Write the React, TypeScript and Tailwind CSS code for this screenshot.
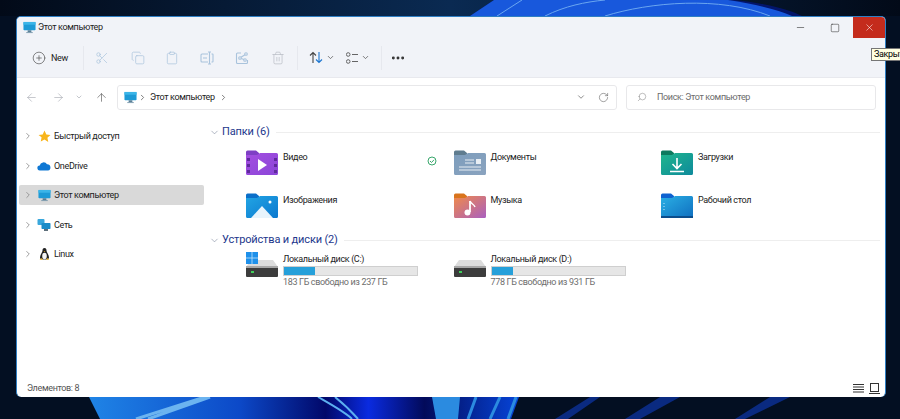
import { ArrowLeft, ArrowRight, ArrowUp, ChevronDown, ChevronRight, CirclePlus, Clipboard, Copy, Ellipsis, RotateCw, Scissors, Search, Square, Trash2, X, Minus } from 'lucide-react'
import type { ReactNode } from 'react'

const font = "font-['Roboto','Open_Sans',sans-serif]"
// window text is Segoe-narrow in the picture, Roboto needs a little squeezing
const small = 'text-[9px] tracking-[-0.35px]'
const nudged = 'text-[9px] tracking-[-0.35px] translate-y-[1px]'

function Wallpaper() {
  return (
    <svg className="absolute inset-0" width="900" height="419" viewBox="0 0 900 419">
      <defs>
        <linearGradient id="top" x1="0" y1="0" x2="1" y2="0">
          <stop offset="0" stopColor="#020a18" />
          <stop offset="0.5" stopColor="#0a2a52" />
          <stop offset="1" stopColor="#020a18" />
        </linearGradient>
        <linearGradient id="bottom" x1="0" y1="0" x2="1" y2="0">
          <stop offset="0" stopColor="#1f84e6" />
          <stop offset="0.35" stopColor="#0c49c8" />
          <stop offset="0.55" stopColor="#01086a" />
          <stop offset="0.65" stopColor="#0a2be0" />
          <stop offset="0.78" stopColor="#020a5a" />
          <stop offset="1" stopColor="#0644d8" />
        </linearGradient>
      </defs>
      <rect width="900" height="419" fill="#030f22" />
      <rect width="900" height="16" fill="url(#top)" />
      <path d="M735 0 C770 4 790 10 802 16 L470 16 L494 0 Z" fill="#03156a" />
      <path d="M470 16 L494 0 L728 0 C755 4 778 10 792 16 Z" fill="#1858dc" />
      <path d="M497 16 L522 0 M545 16 C565 6 585 2 605 0 M605 16 C650 2 720 -4 770 16" stroke="#6aa6f0" strokeWidth="1" fill="none" />
      <path d="M89 397 L519 397 L511 419 L100 419 Z" fill="url(#bottom)" />
      <path d="M136 419 L205 397 M148 419 L210 397" stroke="#6cb4f0" strokeWidth="3" fill="none" />
      <path d="M318 397 C332 405 345 412 352 419 M335 397 C345 405 352 412 358 419" stroke="#5cb0f0" strokeWidth="2" fill="none" />
      <path d="M432 397 L436 419 L458 419 L460 397 Z" fill="#2b8be0" />
      <path d="M476 397 L468 419 M500 397 L490 419 M516 397 L508 419" stroke="#2b8be0" strokeWidth="3" fill="none" />
      <path d="M590 397 L555 419 L568 419 L600 397 Z M660 397 L625 419 L640 419 L680 397 Z M770 397 L735 419 L745 419 L790 397 Z" fill="#0a2a80" />
    </svg>
  )
}

function SortIcon() {
  return (
    <svg width="14" height="13" viewBox="0 0 14 13" fill="none" strokeWidth="1.100">
      <path d="M4 12V1.500M1 4.500l3-3 3 3" stroke="#444" />
      <path d="M10 1v10.500M7 8.500l3 3 3-3" stroke="#1b75d0" />
    </svg>
  )
}

function ViewIcon() {
  return (
    <svg width="12" height="12" viewBox="0 0 12 12" fill="none" stroke="#555" strokeWidth="0.900">
      <circle cx="2.200" cy="2.500" r="1.800" />
      <circle cx="2.200" cy="9.500" r="1.800" />
      <path d="M6 2.500h6M6 9.500h6" />
    </svg>
  )
}

function RenameIcon() {
  return (
    <svg width="14" height="14" viewBox="0 0 14 14" fill="none" stroke="#a9c3dc" strokeWidth="1.100">
      <path d="M8 3H2a1 1 0 0 0-1 1v6a1 1 0 0 0 1 1h6M11.500 3h1a.500.500 0 0 1 .500.500v7a.500.500 0 0 1-.500.500h-1" />
      <path d="M9.500 1v12M8 1h3M8 13h3M3 7h4" />
    </svg>
  )
}

function ShareIcon() {
  return (
    <svg width="14" height="14" viewBox="0 0 14 14" fill="none" stroke="#a9c3dc" strokeWidth="1.100">
      <path d="M6 2H2.500a1 1 0 0 0-1 1v8.500a1 1 0 0 0 1 1h9a1 1 0 0 0 1-1V9" />
      <circle cx="11" cy="3" r="1.300" />
      <circle cx="5" cy="7" r="1.300" />
      <circle cx="10" cy="9" r="1.300" />
      <path d="M6 6.300l4-2.600M6.200 7.500l2.700 1" />
    </svg>
  )
}

function ToolButton({ children, className }: { children: ReactNode; className: string }) {
  return <div className={`flex w-[24px] items-center justify-center ${className}`}>{children}</div>
}

function Toolbar() {
  const off = 'text-[#a9c3dc]'
  return (
    <div className="flex h-[39px] items-center pl-[15px]">
      <CirclePlus size={14} strokeWidth={1.2} className="text-[#555]" />
      <span className={`ml-[5px] w-[18px] ${nudged} text-[#222]`}>New</span>
      <div className="ml-[14px] h-[24px] w-px bg-[#e6e8ee]" />
      <ToolButton className="ml-[6px]"><Scissors size={14} strokeWidth={1.2} className={off} /></ToolButton>
      <ToolButton className="ml-[12px]"><Copy size={14} strokeWidth={1.2} className={off} /></ToolButton>
      <ToolButton className="ml-[10px]"><Clipboard size={14} strokeWidth={1.2} className={off} /></ToolButton>
      <ToolButton className="ml-[11px]"><RenameIcon /></ToolButton>
      <ToolButton className="ml-[11px]"><ShareIcon /></ToolButton>
      <ToolButton className="ml-[12px]"><Trash2 size={14} strokeWidth={1.2} className="text-[#b8bcc4]" /></ToolButton>
      <div className="ml-[7px] h-[24px] w-px bg-[#e6e8ee]" />
      <div className="ml-[11px] flex"><SortIcon /></div>
      <ChevronDown size={9} className="ml-[3px] text-[#555]" />
      <div className="ml-[11px] flex"><ViewIcon /></div>
      <ChevronDown size={9} className="ml-[3px] text-[#555]" />
      <div className="ml-[11px] h-[24px] w-px bg-[#e6e8ee]" />
      <Ellipsis size={16} strokeWidth={2.4} className="ml-[8px] text-[#333]" />
    </div>
  )
}

function PcIcon({ size = 13 }: { size?: number }) {
  return (
    <svg width={size} height={size} viewBox="0 0 14 14">
      <rect x="0.500" y="1" width="13" height="9" rx="0.800" fill="#1d9ad6" />
      <rect x="0.500" y="1" width="13" height="3" fill="#3bb5e8" />
      <rect x="5" y="10" width="4" height="2" fill="#5a7f96" />
      <rect x="3.500" y="12" width="7" height="1" fill="#7a99ad" />
    </svg>
  )
}

function AddressRow() {
  return (
    <div className="flex h-[38px] items-center">
      <ArrowLeft size={13} strokeWidth={1.2} className="ml-[8px] text-[#a8acb3]" />
      <ArrowRight size={13} strokeWidth={1.2} className="ml-[14px] text-[#a8acb3]" />
      <ChevronDown size={8} className="ml-[10px] text-[#a8acb3]" />
      <ArrowUp size={13} strokeWidth={1.2} className="ml-[12px] text-[#555]" />
      <div className="ml-[9px] flex h-[25px] w-[500px] items-center rounded-[3px] border border-[#e8e8ea] pl-[6px] pr-[6px]">
        <PcIcon />
        <ChevronRight size={9} className="ml-[1px] text-[#555]" />
        <span className={`ml-[3px] ${nudged} text-[#222]`}>Этот компьютер</span>
        <ChevronRight size={9} className="ml-[4px] text-[#555]" />
        <ChevronDown size={10} className="ml-auto text-[#777]" />
        <RotateCw size={11} strokeWidth={1.3} className="ml-[12px] mr-[1px] text-[#666]" />
      </div>
      <div className="ml-[9px] flex h-[25px] w-[250px] items-center rounded-[3px] border border-[#e8e8ea] pl-[10px]">
        <Search size={10} strokeWidth={1.3} className="-scale-x-100 text-[#888]" />
        <span className={`ml-[10px] ${nudged} text-[#6c6c6c]`}>Поиск: Этот компьютер</span>
      </div>
    </div>
  )
}

function SideItem({ icon, label, selected }: { icon: ReactNode; label: string; selected?: boolean }) {
  return (
    <div className={`flex h-[20px] items-center rounded-[2px] pl-[4px] ${selected ? 'bg-[#d9d9d9]' : ''}`}>
      <ChevronRight size={10} strokeWidth={2} className="text-[#8a8a8a]" />
      <span className="ml-[4px] flex w-[14px] justify-center">{icon}</span>
      <span className={`ml-[3px] ${nudged} text-[#222]`}>{label}</span>
    </div>
  )
}

function Sidebar() {
  return (
    <div className="flex w-[187px] shrink-0 flex-col gap-[9.500px] pl-[2px] pt-[10px]">
      <SideItem label="Быстрый доступ" icon={<svg width="13" height="13" viewBox="0 0 24 24"><path d="M12 1l3.400 7.200 7.600 1-5.600 5.300 1.500 7.700L12 17.400l-6.900 3.800 1.500-7.700L1 9.200l7.600-1z" fill="#f8b51c" /></svg>} />
      <SideItem label="OneDrive" icon={<svg width="14" height="10" viewBox="0 0 14 10"><path d="M3 9.500a2.500 2.500 0 0 1-.3-5A4 4 0 0 1 10 3.200 3.200 3.200 0 0 1 11 9.500z" fill="#0f78d4" /></svg>} />
      <SideItem label="Этот компьютер" selected icon={<PcIcon />} />
      <SideItem label="Сеть" icon={<svg width="14" height="14" viewBox="0 0 14 14"><rect x="0.500" y="1" width="7" height="6" rx="1" fill="#39a7dc" /><rect x="4.500" y="5" width="9" height="6" rx="0.800" fill="#1b8cc8" /><rect x="7" y="11" width="4" height="2" fill="#5d6f7b" /></svg>} />
      <SideItem label="Linux" icon={<svg width="13" height="14" viewBox="0 0 13 14"><path d="M6.500 1C5 1 4.500 2.200 4.500 3.500 4.500 5.500 2 7.500 2 10.500c0 1 .5 2 4.500 2s4.500-1 4.500-2c0-3-2.500-5-2.500-7C8.500 2.200 8 1 6.500 1z" fill="#222" /><ellipse cx="6.500" cy="9" rx="2.300" ry="3.200" fill="#f4f4f4" /><path d="M1.500 12.500L4 11l.5 2zM11.500 12.500L9 11l-.5 2z" fill="#eeb21c" /><path d="M5.700 4h1.600L6.500 5z" fill="#eeb21c" /></svg>} />
    </div>
  )
}

function SectionHeader({ label }: { label: string }) {
  return (
    <div className="flex h-[16px] items-center">
      <ChevronDown size={11} strokeWidth={1.2} className="text-[#6f7a92]" />
      <span className="ml-[2px] text-[11px] tracking-[-0.15px] text-[#22378c]">{label}</span>
      <div className="ml-[6px] mr-[5px] h-px flex-1 bg-[#eeeeee]" />
    </div>
  )
}

function Folder({ back, front, to, children }: { back: string; front: string; to: string; children?: ReactNode }) {
  const id = `f${front.slice(1)}`
  return (
    <svg width="32" height="25" viewBox="0 0 32 25" className="shrink-0">
      <defs>
        <linearGradient id={id} x1="0" y1="0" x2="1" y2="1">
          <stop offset="0" stopColor={front} />
          <stop offset="1" stopColor={to} />
        </linearGradient>
      </defs>
      <path d="M0 2a1.500 1.500 0 0 1 1.500-1.500H10l3 2.500v3H0z" fill={back} />
      <path d="M0 5h11l3-2h16.500A1.500 1.500 0 0 1 32 4.500v19a1.500 1.500 0 0 1-1.500 1.500h-29A1.500 1.500 0 0 1 0 23.500z" fill={`url(#${id})`} />
      {children}
    </svg>
  )
}

const folders: { label: string; icon: ReactNode }[] = [
  {
    label: 'Видео',
    icon: (
      <Folder back="#7e3fc4" front="#a44fe0" to="#8b45d8">
        <path d="M1 8h3v3H1zM1 14h3v3H1zM1 20h3v3H1zM28 8h3v3h-3zM28 14h3v3h-3zM28 20h3v3h-3z" fill="#5f2a9c" />
        <path d="M12 9l9 6-9 6z" fill="#fff" />
      </Folder>
    ),
  },
  {
    label: 'Документы',
    icon: (
      <Folder back="#5f7c8f" front="#7d9dbc" to="#8aa3bf">
        <path d="M11 10h9M11 13h9M5 17h22M5 20h22" stroke="#e8eef4" strokeWidth="1.200" />
        <rect x="22" y="9" width="5" height="5" fill="#e8eef4" />
      </Folder>
    ),
  },
  {
    label: 'Загрузки',
    icon: (
      <Folder back="#0d7a5e" front="#20b68c" to="#0e8a9c">
        <path d="M16 8v10M11.500 14l4.500 4.500 4.500-4.500M9 21.500h14" stroke="#fff" strokeWidth="1.600" fill="none" />
      </Folder>
    ),
  },
  {
    label: 'Изображения',
    icon: (
      <Folder back="#0b6fc9" front="#22a5e4" to="#0b78cf">
        <path d="M5 25L16 13l11 12z" fill="#e8f4fc" />
        <circle cx="24" cy="9" r="1.500" fill="#fff" />
      </Folder>
    ),
  },
  {
    label: 'Музыка',
    icon: (
      <Folder back="#d9741c" front="#f08a4a" to="#a95fc0">
        <path d="M16 8v11" stroke="#fff" strokeWidth="1.800" />
        <path d="M16 8c1 3 4 3 5 6" stroke="#fff" strokeWidth="1.500" fill="none" />
        <circle cx="13.500" cy="19.500" r="3" fill="#fff" />
      </Folder>
    ),
  },
  {
    label: 'Рабочий стол',
    icon: (
      <Folder back="#0e62d0" front="#2bb0e4" to="#0f6fc0">
        <rect x="0" y="23" width="32" height="2" fill="#0b4d8c" />
        <path d="M3 10v1M3 13v1M3 16v1" stroke="#bfe6fa" />
      </Folder>
    ),
  },
]

const disks = [
  { label: 'Локальный диск (C:)', free: '183 ГБ свободно из 237 ГБ', fill: 'w-[23%]', windows: true },
  { label: 'Локальный диск (D:)', free: '778 ГБ свободно из 931 ГБ', fill: 'w-[16%]', windows: false },
]

function DiskIcon({ windows }: { windows: boolean }) {
  return (
    <svg width="32" height="27" viewBox="0 0 32 27" className="shrink-0">
      <path d="M5 8h22l5 7H0z" fill="#dcdcdc" />
      <rect x="0" y="15" width="32" height="10" rx="1" fill="#3c3c3c" />
      <rect x="0" y="14" width="32" height="2" fill="#a8a8a8" />
      <rect x="5" y="19" width="3" height="2" fill="#3fd05a" />
      {windows && (
        <g>
          <rect x="0" y="0" width="12" height="12" fill="#1e90ea" />
          <path d="M6 0v12M0 6h12" stroke="#bfe3fb" strokeWidth="0.800" />
        </g>
      )}
    </svg>
  )
}

function Content() {
  return (
    <div className="relative flex-1 pl-[5px] pt-[8px]">
      <SectionHeader label="Папки (6)" />
      <div className="ml-[37px] mt-[10px] grid grid-cols-[207.500px_207.500px_1fr] gap-y-[18px]">
        {folders.map((f) => (
          <div key={f.label} className="flex h-[25px] items-start gap-[5px]">
            {f.icon}
            <span className={`${nudged} text-[#222]`}>{f.label}</span>
          </div>
        ))}
      </div>
      {/* sync status */}
      <svg className="absolute left-[223px] top-[40px]" width="10" height="10" viewBox="0 0 10 10" fill="none" stroke="#3aa76d">
        <circle cx="5" cy="5" r="4" />
        <path d="M3 5l1.500 1.500L7 3.800" />
      </svg>
      <div className="mt-[14px]"><SectionHeader label="Устройства и диски (2)" /></div>
      <div className="ml-[37px] mt-[4px] grid grid-cols-[207.500px_207.500px]">
        {disks.map((d) => (
          <div key={d.label} className="flex gap-[5px]">
            <DiskIcon windows={d.windows} />
            <div className="w-[135px]">
              <div className={`${small} leading-[14px] text-[#222]`}>{d.label}</div>
              <div className="h-[10px] border border-[#cfcfcf] bg-[#e6e6e6]">
                <div className={`h-full bg-[#26a0da] ${d.fill}`} />
              </div>
              <div className={`${small} leading-[13px] text-[#6d6d6d]`}>{d.free}</div>
            </div>
          </div>
        ))}
      </div>
    </div>
  )
}

export default function App() {
  return (
    <div className={`relative h-[419px] w-[900px] overflow-hidden pl-4 pt-4 ${font}`}>
      <Wallpaper />
      <div className="relative flex h-[381px] w-[870px] flex-col overflow-hidden rounded-[5px] border-x border-t border-[#2f7fc4] bg-white">
        <div className="bg-[#f1f3f8]">
          <div className="flex h-[21px] items-center pl-[6px]">
            <PcIcon />
            <span className={`ml-[2px] mt-[1px] ${small} text-[#222]`}>Этот компьютер</span>
            <Minus size={11} strokeWidth={1.2} className="ml-auto text-[#222]" />
            <Square size={10} strokeWidth={1.2} className="ml-[24px] text-[#222]" />
            <div className="ml-[13px] flex h-[21px] w-[32px] items-center justify-center bg-[#c42b1c]">
              <X size={11} strokeWidth={1.2} className="text-white" />
            </div>
          </div>
          <Toolbar />
        </div>
        <div className="h-px bg-[#e8e9ee]" />
        <AddressRow />
        <div className="flex flex-1">
          <Sidebar />
          <Content />
        </div>
        <div className="flex h-[22px] items-center pl-[10px] pr-[5px] pt-[4px]">
          <span className={`${nudged} text-[#555]`}>Элементов: 8</span>
          <div className="ml-auto flex items-center gap-[5px] text-[#333]">
            <svg width="11" height="10" viewBox="0 0 11 10" stroke="currentColor"><path d="M0 1.500h11M0 4h11M0 6.500h11M0 9h11" /></svg>
            <svg width="11" height="11" viewBox="0 0 11 11" fill="none" stroke="currentColor"><rect x="1.500" y="0.500" width="8" height="8" /><path d="M0 10.500h11" /></svg>
          </div>
        </div>
      </div>
      <div className={`absolute left-[871px] top-[48px] whitespace-nowrap border border-[#767676] bg-[#ffffe1] px-[2px] ${small} leading-[11px] text-black`}>Закрыть</div>
    </div>
  )
}
